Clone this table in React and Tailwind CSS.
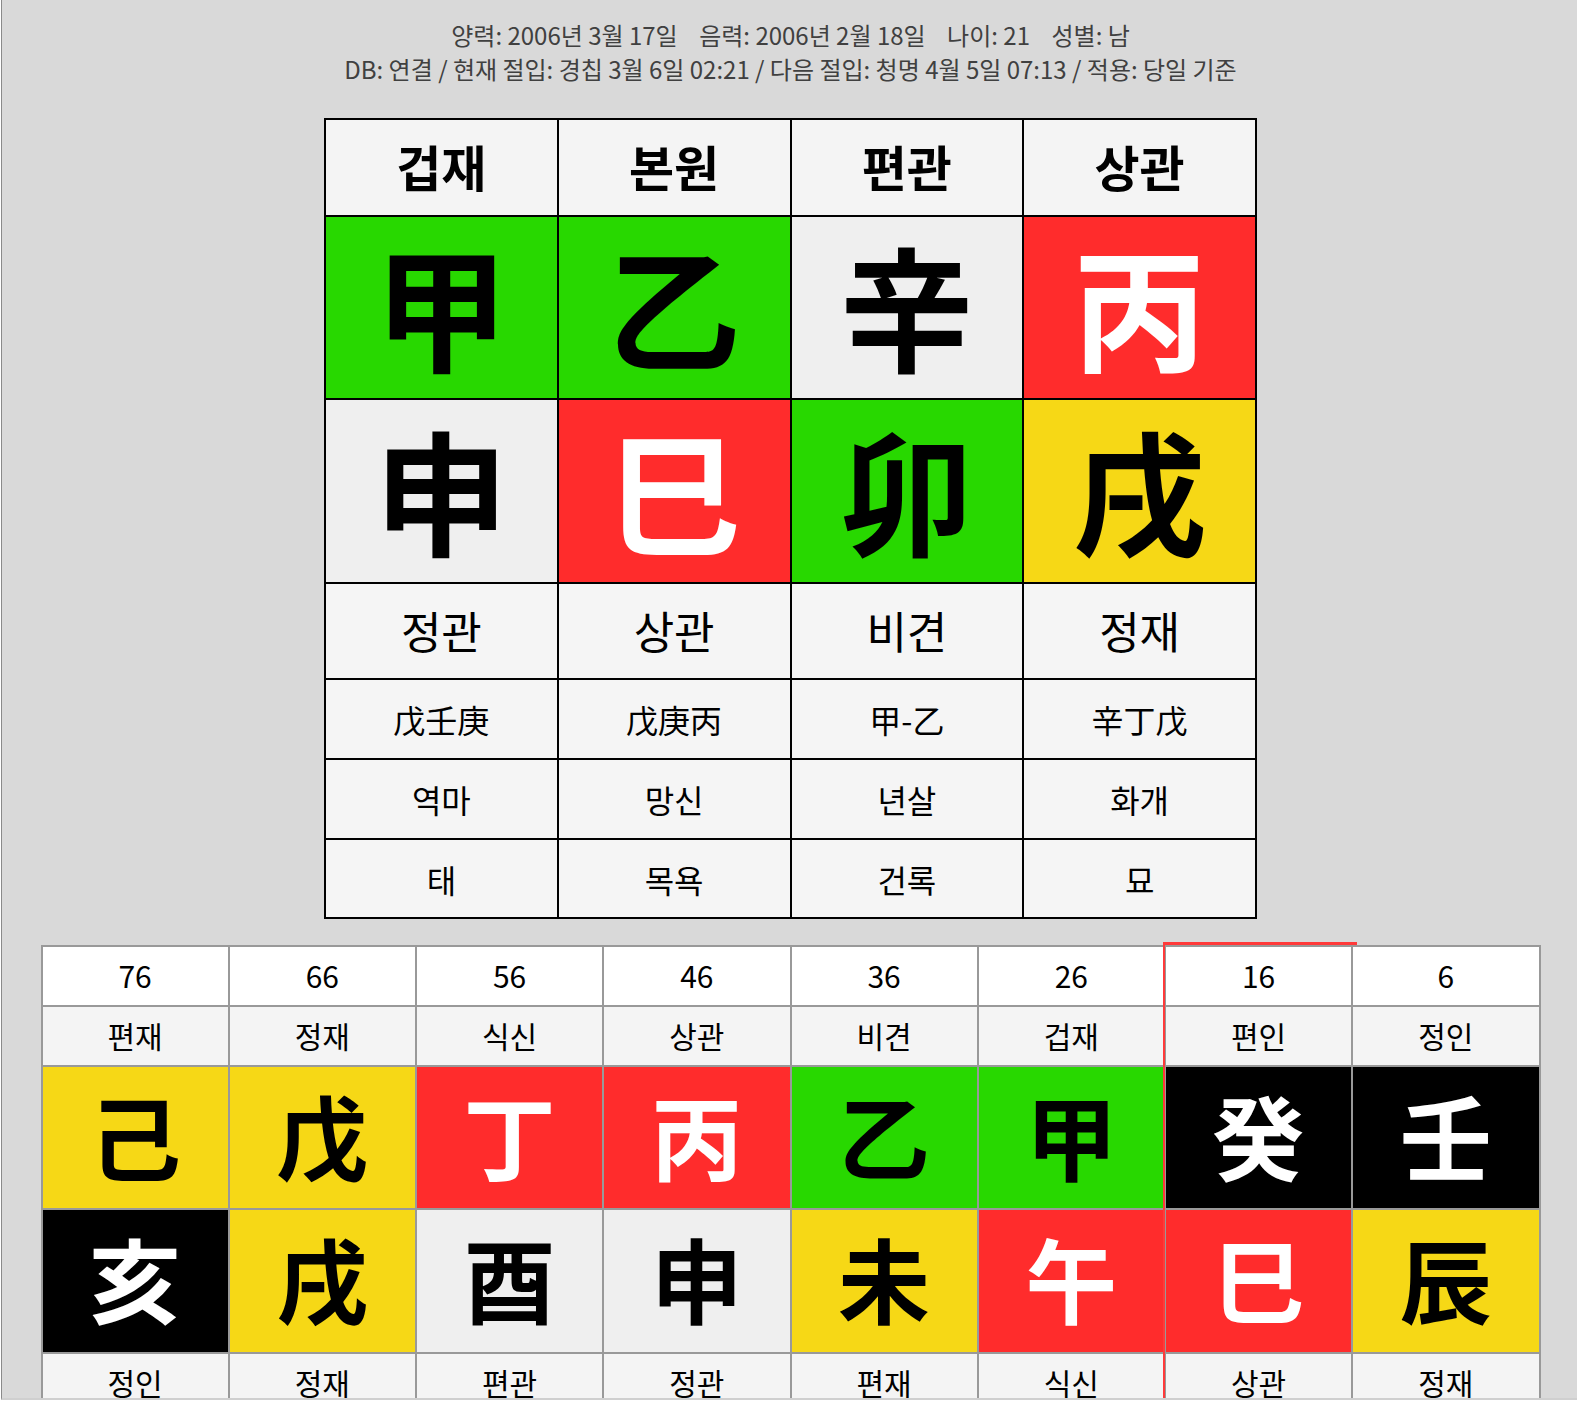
import React from 'react';

const FONT = { fontFamily: '"Noto Sans CJK KR", "Noto Sans", sans-serif' };

// element colours
const EL = {
    wood: 'bg-[#28d800] text-black',
    fire: 'bg-[#ff2c2c] text-white',
    earth: 'bg-[#f6d816] text-black',
    metal: 'bg-[#efefef] text-black',
    water: 'bg-black text-white',
};

const pillars = [
    { head: '겁재', stem: ['甲', 'wood'], branch: ['申', 'metal'], ten: '정관', hidden: '戊壬庚', sal: '역마', un: '태' },
    { head: '본원', stem: ['乙', 'wood'], branch: ['巳', 'fire'], ten: '상관', hidden: '戊庚丙', sal: '망신', un: '목욕' },
    { head: '편관', stem: ['辛', 'metal'], branch: ['卯', 'wood'], ten: '비견', hidden: '甲-乙', sal: '년살', un: '건록' },
    { head: '상관', stem: ['丙', 'fire'], branch: ['戌', 'earth'], ten: '정재', hidden: '辛丁戊', sal: '화개', un: '묘' },
];

const daeun = [
    { age: 76, top: '편재', stem: ['己', 'earth'], branch: ['亥', 'water'], bottom: '정인' },
    { age: 66, top: '정재', stem: ['戊', 'earth'], branch: ['戌', 'earth'], bottom: '정재' },
    { age: 56, top: '식신', stem: ['丁', 'fire'], branch: ['酉', 'metal'], bottom: '편관' },
    { age: 46, top: '상관', stem: ['丙', 'fire'], branch: ['申', 'metal'], bottom: '정관' },
    { age: 36, top: '비견', stem: ['乙', 'wood'], branch: ['未', 'earth'], bottom: '편재' },
    { age: 26, top: '겁재', stem: ['甲', 'wood'], branch: ['午', 'fire'], bottom: '식신' },
    { age: 16, top: '편인', stem: ['癸', 'water'], branch: ['巳', 'fire'], bottom: '상관' },
    { age: 6, top: '정인', stem: ['壬', 'water'], branch: ['辰', 'earth'], bottom: '정재' },
];

const td = 'border-2 border-black text-center align-middle p-0';
const dtd = 'border-2 border-[#999] text-center align-middle p-0';

export default function App() {
    return (
        <div className="bg-white min-h-screen" style={FONT}>
            <div className="ml-px pl-[2px] border-l border-[#8a8a8a] bg-[#d9d9d9] h-[1400px] overflow-hidden border-b-2 border-b-[#cfcfcf]">
                <div className="pt-[18px] text-center text-[24px] leading-[34px] text-[#404040]">
                    <p>양력: 2006년 3월 17일&nbsp;&nbsp;&nbsp; 음력: 2006년 2월 18일&nbsp;&nbsp;&nbsp; 나이: 21&nbsp;&nbsp;&nbsp; 성별: 남</p>
                    <p>DB: 연결 / 현재 절입: 경칩 3월 6일 02:21 / 다음 절입: 청명 4월 5일 07:13 / 적용: 당일 기준</p>
                </div>

                <table className="mt-[32px] mx-auto w-[933px] table-fixed border-collapse">
                    <tbody>
                        <tr>
                            {pillars.map((p, i) => (
                                <td key={i} className={`${td} h-[97px] bg-[#f4f4f4] text-[49px] font-bold text-black pb-[4px]`}>{p.head}</td>
                            ))}
                        </tr>
                        <tr>
                            {pillars.map((p, i) => (
                                <td key={i} className={`${td} h-[183px] text-[134px] font-bold leading-none pb-[8px] ${EL[p.stem[1]]}`}>{p.stem[0]}</td>
                            ))}
                        </tr>
                        <tr>
                            {pillars.map((p, i) => (
                                <td key={i} className={`${td} h-[184px] text-[134px] font-bold leading-none pb-[6px] ${EL[p.branch[1]]}`}>{p.branch[0]}</td>
                            ))}
                        </tr>
                        <tr>
                            {pillars.map((p, i) => (
                                <td key={i} className={`${td} h-[96px] bg-[#f5f5f5] text-[44px] text-black pb-[2px]`}>{p.ten}</td>
                            ))}
                        </tr>
                        <tr>
                            {pillars.map((p, i) => (
                                <td key={i} className={`${td} h-[80px] bg-[#f5f5f5] text-[32px] text-black`}>{p.hidden}</td>
                            ))}
                        </tr>
                        <tr>
                            {pillars.map((p, i) => (
                                <td key={i} className={`${td} h-[80px] bg-[#f5f5f5] text-[32px] text-black`}>{p.sal}</td>
                            ))}
                        </tr>
                        <tr>
                            {pillars.map((p, i) => (
                                <td key={i} className={`${td} h-[79px] bg-[#f5f5f5] text-[32px] text-black`}>{p.un}</td>
                            ))}
                        </tr>
                    </tbody>
                </table>

                <div className="relative mt-[26px] mx-auto w-[1500px]">
                    <table className="w-full table-fixed border-collapse">
                        <tbody>
                            <tr>
                                {daeun.map((d, i) => (
                                    <td key={i} className={`${dtd} h-[60px] bg-white text-[30px] text-black pb-[2px]`}>{d.age}</td>
                                ))}
                            </tr>
                            <tr>
                                {daeun.map((d, i) => (
                                    <td key={i} className={`${dtd} h-[60px] bg-[#f4f4f4] text-[30px] text-black pb-[2px]`}>{d.top}</td>
                                ))}
                            </tr>
                            <tr>
                                {daeun.map((d, i) => (
                                    <td key={i} className={`${dtd} h-[143px] text-[92px] font-bold leading-none pb-[8px] ${EL[d.stem[1]]}`}>{d.stem[0]}</td>
                                ))}
                            </tr>
                            <tr>
                                {daeun.map((d, i) => (
                                    <td key={i} className={`${dtd} h-[144px] text-[92px] font-bold leading-none pb-[8px] ${EL[d.branch[1]]}`}>{d.branch[0]}</td>
                                ))}
                            </tr>
                            <tr>
                                {daeun.map((d, i) => (
                                    <td key={i} className={`${dtd} h-[60px] bg-[#f4f4f4] text-[30px] text-black pb-[2px]`}>{d.bottom}</td>
                                ))}
                            </tr>
                        </tbody>
                    </table>
                    {/* current 대운 marker */}
                    <div className="absolute left-[1122px] -top-[3px] w-[194px] h-[500px] border-t-[3px] border-l-2 border-[#ff3a3a] pointer-events-none" />
                </div>
            </div>
        </div>
    );
}
